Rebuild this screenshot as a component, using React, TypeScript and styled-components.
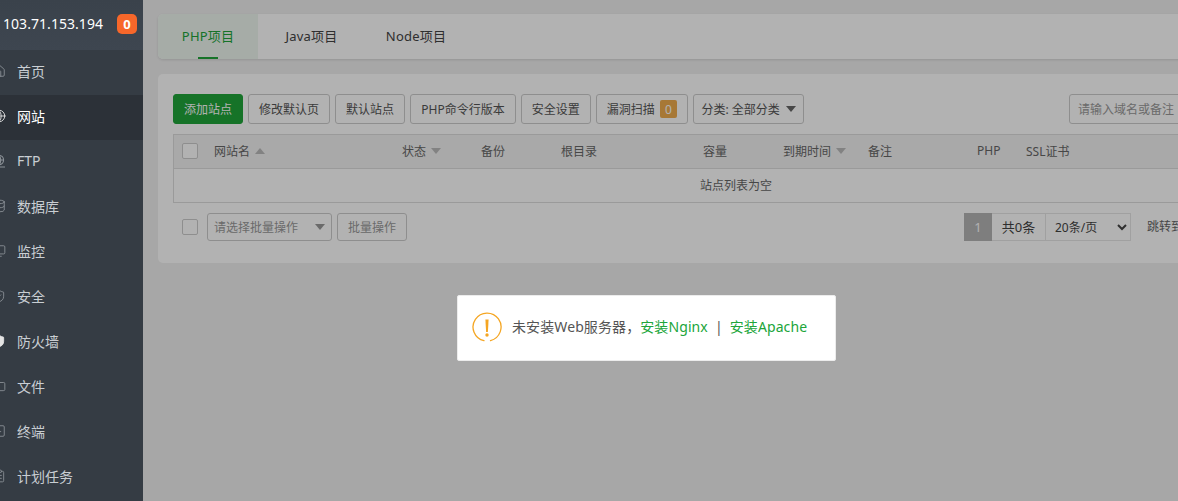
import styled, { createGlobalStyle } from "styled-components";
import { ClipboardList, Database, Folder, Globe, Home, LucideProps, Monitor, Shield, ShieldCheck, SquareTerminal } from "lucide-react";

const GlobalStyle = createGlobalStyle`
  html, body {
    margin: 0;
    height: 100%;
    overflow: hidden;
    background: #f0f0f0;
    font-family: "Noto Sans", "Noto Sans CJK SC", sans-serif;
    font-size: 12px;
    color: #555;
  }
`;

const Shell = styled.div`
  display: flex;
  width: 1346px;
  height: 501px;
  margin-left: -17px;
  overflow: hidden;
`;

const Sidebar = styled.aside`
  position: relative;
  z-index: 20;
  flex: 0 0 160px;
  background: #353c44;
`;

const ServerHead = styled.div`
  display: flex;
  align-items: center;
  justify-content: space-between;
  height: 50px;
  padding: 0 6px 2px 20px;
  box-sizing: border-box;
  background: linear-gradient(#3a424b, #3e4650);
  color: #fff;
  font-size: 14px;
`;

const ServerIp = styled.span`
  padding-bottom: 2px;
  letter-spacing: 0.05px;
`;

const Count = styled.span`
  display: flex;
  align-items: center;
  justify-content: center;
  width: 20px;
  height: 20px;
  border-radius: 5px;
  background: #f7672a;
  font-size: 13px;
  font-weight: 700;
`;

const MenuItem = styled.div<{ $active?: boolean; $solid?: boolean }>`
  display: flex;
  align-items: center;
  gap: 11px;
  height: 45px;
  padding: 0 0 4px 9px;
  box-sizing: border-box;
  background: ${(p) => (p.$active ? "#2c3138" : "transparent")};
  color: ${(p) => (p.$active ? "#fff" : "#c9ced3")};
  font-size: 14px;
  svg {
    flex: none;
    color: ${(p) => (p.$active || p.$solid ? "#e4e4e4" : "#8b9197")};
    fill: ${(p) => (p.$solid ? "#e4e4e4" : "none")};
  }
`;

const Main = styled.main`
  flex: 1;
  display: flex;
  flex-direction: column;
  gap: 15px;
  padding: 14px 15px;
`;

const TabBar = styled.div`
  display: flex;
  height: 45px;
  border-radius: 5px;
  background: #fff;
  box-shadow: 0 1px 3px rgba(0, 0, 0, 0.12);
  overflow: hidden;
`;

const Tab = styled.div<{ $active?: boolean; $width: number }>`
  position: relative;
  display: flex;
  align-items: center;
  justify-content: center;
  width: ${(p) => p.$width}px;
  padding-bottom: 2px;
  box-sizing: border-box;
  background: ${(p) => (p.$active ? "#eef6f0" : "transparent")};
  color: ${(p) => (p.$active ? "#20a53a" : "#444")};
  font-size: 13px;
  letter-spacing: 0.2px;
  &::after {
    content: "";
    display: ${(p) => (p.$active ? "block" : "none")};
    position: absolute;
    left: 40px;
    bottom: 0;
    width: 20px;
    height: 2px;
    background: #20a53a;
  }
`;

const Card = styled.section`
  display: flex;
  flex-direction: column;
  padding: 20px 15px 22px;
  border-radius: 5px;
  background: #fff;
`;

const Toolbar = styled.div`
  display: flex;
  align-items: center;
  gap: 5px;
  height: 30px;
`;

const Button = styled.div<{ $primary?: boolean; $muted?: boolean; $pad?: number }>`
  display: flex;
  align-items: center;
  justify-content: center;
  gap: 5px;
  height: 30px;
  padding: 0 ${(p) => p.$pad ?? 10}px;
  box-sizing: border-box;
  border: 1px solid ${(p) => (p.$primary ? "#20a53a" : "#ccc")};
  border-radius: 3px;
  background: ${(p) => (p.$primary ? "#20a53a" : "#fff")};
  color: ${(p) => (p.$primary ? "#fff" : p.$muted ? "#999" : "#555")};
  white-space: nowrap;
`;

const ScanBadge = styled.span`
  display: flex;
  align-items: center;
  justify-content: center;
  width: 17px;
  height: 18px;
  border-radius: 2px;
  background: #f0ad4e;
  color: #fff;
`;

const Caret = styled.span<{ $up?: boolean; $color?: string }>`
  display: inline-block;
  width: 0;
  height: 0;
  border-left: 5px solid transparent;
  border-right: 5px solid transparent;
  ${(p) => (p.$up ? "border-bottom" : "border-top")}: 6px solid ${(p) => p.$color ?? "#bbb"};
`;

const CategorySelect = styled(Button)`
  gap: 6px;
`;

const SearchBox = styled.div`
  display: flex;
  align-items: center;
  width: 230px;
  height: 30px;
  margin-left: auto;
  padding-left: 8px;
  box-sizing: border-box;
  border: 1px solid #ccc;
  border-radius: 3px;
  color: #999;
`;

const Table = styled.div`
  margin-top: 10px;
  border: 1px solid #ddd;
  color: #666;
`;

const HeadRow = styled.div`
  display: grid;
  grid-template-columns: 40px 188px 79px 80px 142px 80px 85px 109px 49px 1fr;
  align-items: center;
  padding-bottom: 1px;
  height: 32px;
  background: #f2f2f2;
  border-bottom: 1px solid #ddd;
`;

const HeadCell = styled.div`
  display: flex;
  align-items: center;
  gap: 5px;
  padding-bottom: 1px;
`;

const CheckCell = styled.div`
  padding-left: 8px;
  display: flex;
`;

const EmptyRow = styled.div`
  display: flex;
  align-items: center;
  justify-content: center;
  height: 33px;
  padding-bottom: 2px;
  box-sizing: border-box;
`;

const CheckBox = styled.span`
  display: block;
  width: 16px;
  height: 16px;
  box-sizing: border-box;
  border: 1px solid #ccc;
  border-radius: 2px;
  background: #fff;
`;

const Footer = styled.div`
  display: flex;
  align-items: center;
  height: 28px;
  margin-top: 10px;
  padding-left: 9px;
`;

const BatchSelect = styled.div`
  display: flex;
  align-items: center;
  justify-content: space-between;
  width: 125px;
  height: 28px;
  margin-left: 9px;
  padding: 0 6px 1px;
  box-sizing: border-box;
  border: 1px solid #ccc;
  border-radius: 3px;
  color: #999;
`;

const BatchButton = styled(Button)`
  height: 28px;
  margin-left: 5px;
  padding-bottom: 1px;
`;

const Pager = styled.div`
  display: flex;
  align-items: center;
  height: 28px;
  margin-left: auto;
  color: #444;
`;

const PageCell = styled.div<{ $current?: boolean; $width: number }>`
  display: flex;
  align-items: center;
  justify-content: center;
  width: ${(p) => p.$width}px;
  height: 28px;
  padding-bottom: 1px;
  box-sizing: border-box;
  border: 1px solid ${(p) => (p.$current ? "#b5b5b5" : "#e6e6e6")};
  border-left-width: ${(p) => (p.$current ? 1 : 0)}px;
  background: ${(p) => (p.$current ? "#b5b5b5" : "#fff")};
  color: ${(p) => (p.$current ? "#fff" : "#444")};
  font-size: 13px;
`;

const PageSelect = styled.select`
  width: 85px;
  height: 28px;
  padding: 0 0 0 5px;
  box-sizing: border-box;
  border: 1px solid #e6e6e6;
  border-left: 0;
  border-radius: 0;
  background: #fff;
  color: #444;
  font: inherit;
  outline: none;
`;

const JumpLabel = styled.span`
  margin-left: 16px;
  margin-right: 5px;
  padding-bottom: 3px;
  color: #666;
`;

const JumpInput = styled.span`
  display: block;
  width: 40px;
  height: 26px;
  margin-right: 5px;
  border: 1px solid #ddd;
`;

const ConfirmButton = styled(Button)`
  width: 47px;
  height: 28px;
  margin-left: 5px;
  padding: 0;
`;

const Overlay = styled.div`
  position: fixed;
  inset: 0;
  z-index: 10;
  background: rgba(0, 0, 0, 0.3);
`;

const Toast = styled.div`
  position: fixed;
  left: 457px;
  top: 295px;
  z-index: 30;
  display: flex;
  align-items: center;
  gap: 10px;
  width: 379px;
  height: 66px;
  padding: 0 0 2px 14px;
  box-sizing: border-box;
  border: 1px solid #ececec;
  border-radius: 2px;
  background: #fff;
  color: #555;
  font-size: 14px;
`;

const ToastText = styled.span`
  padding-bottom: 2px;
  letter-spacing: 0.1px;
`;

const InstallLink = styled.span`
  color: #20a53a;
`;

const Divider = styled.span`
  margin: 0 7px;
  color: #555;
`;

function FtpIcon(props: LucideProps) {
  return (
    <svg width={props.size} height={props.size} viewBox="0 0 14 14" fill="none" stroke="currentColor" strokeWidth="1.1">
      <circle cx="7" cy="6" r="4.6" />
      <path d="M2.4 6h9.2M7 1.4c2.4 2.6 2.4 6.6 0 9.2M7 1.4c-2.4 2.6-2.4 6.6 0 9.2M1 13h12" />
    </svg>
  );
}

const menu = [
  { name: "首页", icon: Home },
  { name: "网站", icon: Globe, active: true },
  { name: "FTP", icon: FtpIcon },
  { name: "数据库", icon: Database },
  { name: "监控", icon: Monitor },
  { name: "安全", icon: ShieldCheck },
  { name: "防火墙", icon: Shield, solid: true },
  { name: "文件", icon: Folder },
  { name: "终端", icon: SquareTerminal },
  { name: "计划任务", icon: ClipboardList },
];

function WarnIcon() {
  return (
    <svg width="30" height="30" viewBox="0 0 30 30" fill="none">
      <path d="M18.5 28.6A14 14 0 1 0 12 28.7" stroke="#f5a623" strokeWidth="1.3" strokeLinecap="round" />
      <path d="M13.4 7.5h3.2l-.7 12.5h-1.8z" fill="#f5a623" />
      <circle cx="15" cy="23" r="1.7" fill="#f5a623" />
    </svg>
  );
}

export default function App() {
  return (
    <>
      <GlobalStyle />
      <Shell>
        <Sidebar>
          <ServerHead>
            <ServerIp>103.71.153.194</ServerIp>
            <Count>0</Count>
          </ServerHead>
          {menu.map((item) => (
            <MenuItem key={item.name} $active={item.active} $solid={item.solid}>
              <item.icon size={14} strokeWidth={1.5} />
              {item.name}
            </MenuItem>
          ))}
        </Sidebar>
        <Main>
          <TabBar>
            <Tab $active $width={100}>PHP项目</Tab>
            <Tab $width={107}>Java项目</Tab>
            <Tab $width={102}>Node项目</Tab>
          </TabBar>
          <Card>
            <Toolbar>
              <Button $primary>添加站点</Button>
              <Button>修改默认页</Button>
              <Button>默认站点</Button>
              <Button $pad={10.2}>PHP命令行版本</Button>
              <Button>安全设置</Button>
              <Button>漏洞扫描<ScanBadge>0</ScanBadge></Button>
              <CategorySelect $pad={7.5}>分类: 全部分类<Caret $color="#666" /></CategorySelect>
              <SearchBox>请输入域名或备注</SearchBox>
            </Toolbar>
            <Table>
              <HeadRow>
                <CheckCell><CheckBox /></CheckCell>
                <HeadCell>网站名<Caret $up /></HeadCell>
                <HeadCell>状态<Caret /></HeadCell>
                <HeadCell>备份</HeadCell>
                <HeadCell>根目录</HeadCell>
                <HeadCell>容量</HeadCell>
                <HeadCell>到期时间<Caret /></HeadCell>
                <HeadCell>备注</HeadCell>
                <HeadCell>PHP</HeadCell>
                <HeadCell>SSL证书</HeadCell>
              </HeadRow>
              <EmptyRow>站点列表为空</EmptyRow>
            </Table>
            <Footer>
              <CheckBox />
              <BatchSelect>请选择批量操作<Caret $color="#999" /></BatchSelect>
              <BatchButton $muted>批量操作</BatchButton>
              <Pager>
                <PageCell $current $width={28}>1</PageCell>
                <PageCell $width={54}>共0条</PageCell>
                <PageSelect defaultValue="20">
                  <option value="20">20条/页</option>
                </PageSelect>
                <JumpLabel>跳转到</JumpLabel>
                <JumpInput />
                <span>页</span>
                <ConfirmButton>确认</ConfirmButton>
              </Pager>
            </Footer>
          </Card>
        </Main>
      </Shell>
      <Overlay />
      <Toast>
        <WarnIcon />
        <ToastText>
          未安装Web服务器，<InstallLink>安装Nginx</InstallLink>
          <Divider>|</Divider>
          <InstallLink>安装Apache</InstallLink>
        </ToastText>
      </Toast>
    </>
  );
}
